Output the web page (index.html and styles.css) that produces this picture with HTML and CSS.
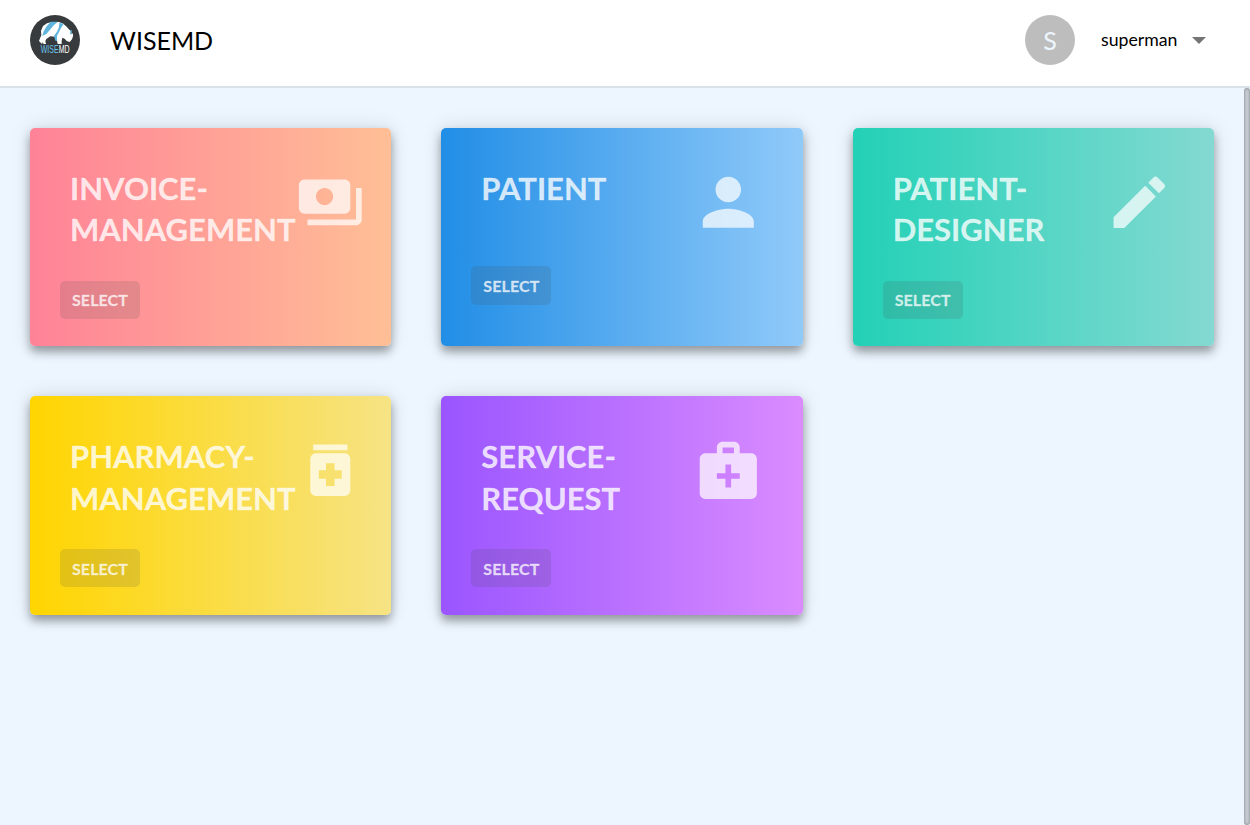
FILE: index.html
```html
<!DOCTYPE html>
<html lang="en">
<head>
<meta charset="utf-8">
<title>WISEMD</title>
<link rel="stylesheet" href="styles.css">
</head>
<body>
<header class="header">
  <svg class="logo" viewBox="30 30 150 150">
    <circle cx="105" cy="105" r="75" fill="#373b3d"/>
    <path fill="#fff" d="M57 108l3-8 4-9-1-14 6-14 12-8 14-4 22 0 13 5 10 9 8 9 5 5 2 9 4-3v9l-3 9-7 8-9-3-6-7-7-3-2 10v9H113l-2-10-6-12-14-1-12 8-3 6 2 9H70l-1-7-3 7z"/>
    <path fill="#5fb4de" d="M92 50h22l-12 10-12 14-10 12-13 7 4-14 9-15zM118 53l13 4-8 12-7 14-5 9v15h-5l-4-15 9-12 6-14zM151 76l4-1v8l-5 7z"/>
    <g transform="translate(62 143) scale(.7 1)">
      <text class="logo-text" x="0" y="0" fill="#6cc5ed">WISE</text>
      <text class="logo-text" x="77.500" y="0" fill="#fff">MD</text>
    </g>
  </svg>
  <h1 class="brand">WISEMD</h1>
  <div class="user">
    <span class="avatar">S</span>
    <span class="username">superman</span>
    <svg class="caret" viewBox="0 0 14 7"><path d="M0 0h14L7 7z" fill="#757575"/></svg>
  </div>
</header>
<main class="content">
  <section class="card invoice">
    <div class="card-head">
      <h2 class="title">INVOICE-<br>MANAGEMENT</h2>
      <svg class="icon" viewBox="0 0 24 24"><path d="M19 14V6c0-1.100-.9-2-2-2H3c-1.100 0-2 .9-2 2v8c0 1.100.9 2 2 2h14c1.100 0 2-.9 2-2zm-9-1c-1.660 0-3-1.340-3-3s1.340-3 3-3 3 1.340 3 3-1.340 3-3 3zm13-6v11c0 1.100-.9 2-2 2H4v-2h17V7h2z"/></svg>
    </div>
    <button class="select">SELECT</button>
  </section>
  <section class="card patient">
    <div class="card-head">
      <h2 class="title">PATIENT</h2>
      <svg class="icon" viewBox="1.250 1.250 21.500 21.500"><path d="M12 12c2.210 0 4-1.790 4-4s-1.790-4-4-4-4 1.790-4 4 1.790 4 4 4zm0 2c-2.670 0-8 1.340-8 4v2h16v-2c0-2.660-5.330-4-8-4z"/></svg>
    </div>
    <button class="select">SELECT</button>
  </section>
  <section class="card designer">
    <div class="card-head">
      <h2 class="title">PATIENT-<br>DESIGNER</h2>
      <svg class="icon" viewBox="0 0 24 24"><path d="M3 17.250V21h3.750L17.810 9.940l-3.750-3.750L3 17.250zM20.710 7.040c.39-.39.39-1.020 0-1.410l-2.340-2.340c-.39-.39-1.020-.39-1.410 0l-1.830 1.830 3.750 3.750 1.830-1.830z"/></svg>
    </div>
    <button class="select">SELECT</button>
  </section>
  <section class="card pharmacy">
    <div class="card-head">
      <h2 class="title">PHARMACY-<br>MANAGEMENT</h2>
      <svg class="icon" viewBox="0 0 24 24"><path d="M6 3h12v2H6zM17 6H7c-1.100 0-2 .9-2 2v11c0 1.100.9 2 2 2h10c1.100 0 2-.9 2-2V8c0-1.100-.9-2-2-2zm-1 9h-2.500v2.500h-3V15H8v-3h2.500V9.500h3V12H16v3z"/></svg>
    </div>
    <button class="select">SELECT</button>
  </section>
  <section class="card service">
    <div class="card-head">
      <h2 class="title">SERVICE-<br>REQUEST</h2>
      <svg class="icon" viewBox="0 0 24 24"><path d="M20 6h-4V4c0-1.100-.9-2-2-2h-4c-1.100 0-2 .9-2 2v2H4c-1.100 0-2 .9-2 2v12c0 1.100.9 2 2 2h16c1.100 0 2-.9 2-2V8c0-1.100-.9-2-2-2zM10 4h4v2h-4V4zm6 11h-3v3h-2v-3H8v-2h3v-3h2v3h3v2z"/></svg>
    </div>
    <button class="select">SELECT</button>
  </section>
</main>
<div class="scroll-thumb"></div>
</body>
</html>
```

FILE: styles.css
```css
* { box-sizing: border-box; }

body {
  margin: 0;
  height: 825px;
  overflow: hidden;
  background: #edf6ff;
  font-family: Lato, "Liberation Sans", sans-serif;
  color: #000;
}

.header {
  display: flex;
  align-items: center;
  height: 88px;
  padding: 0 44px 8px 30px;
  background: #fff;
  border-bottom: 2px solid #dae2e9;
}

.logo { width: 50px; height: 50px; margin-top: 2px; }
.logo-text { font: 30px "Liberation Sans", sans-serif; }

.brand {
  margin: 1px 0 0 30px;
  font-size: 25px;
  font-weight: 400;
}

.user {
  display: flex;
  align-items: center;
  margin: 2px 0 0 auto;
}

.avatar {
  display: flex;
  align-items: center;
  justify-content: center;
  width: 50px;
  height: 50px;
  border-radius: 50%;
  background: #bdbdbd;
  color: #edf6ff;
  font-size: 25px;
}

.username { width: 77px; margin: -2px 0 0 26px; font-size: 17.700px; }
.caret { width: 14px; height: 7px; margin-left: 14px; }

.content {
  display: grid;
  grid-template-columns: repeat(3, minmax(0, 1fr));
  gap: 50px;
  padding: 40px 36px 0 30px;
}

.card {
  height: 218.400px;
  padding: 40px 30px 0;
  border-radius: 5px;
  box-shadow: 0 6px 10px rgba(0, 0, 0, .34), 0 0 20px rgba(0, 0, 0, .12);
}

.card-head {
  display: flex;
  align-items: flex-start;
  justify-content: space-between;
  padding: 0 10px;
}

.title {
  margin: 0;
  font-size: 31px;
  font-weight: 700;
  line-height: 41.400px;
  color: rgba(255, 255, 255, .8);
  -webkit-text-stroke: .3px rgba(255, 255, 255, .5);
}

.icon {
  flex: none;
  width: 68.600px;
  height: 68.600px;
  fill: rgba(255, 255, 255, .72);
}

.select {
  display: block;
  width: 80px;
  height: 38.500px;
  margin: 29.700px 0 0;
  padding: 0;
  border: 0;
  border-radius: 5px;
  background: rgba(77, 77, 77, .15);
  color: rgba(255, 255, 255, .75);
  font: 700 16px Lato, sans-serif;
  letter-spacing: .1px;
  -webkit-text-stroke: .3px rgba(255, 255, 255, .5);
}

.invoice { background: linear-gradient(90deg, #ff8297, #ffbf96); }
.patient { background: linear-gradient(90deg, #218ee6, #90caf9); }
.designer { background: linear-gradient(90deg, #22d1b6, #84d9d2); }
.pharmacy { background: linear-gradient(90deg, #ffd500, #f6e384); }
.service { background: linear-gradient(90deg, #9a55ff, #da8cff); }

.scroll-thumb {
  position: absolute;
  top: 88px;
  right: 0;
  width: 6px;
  height: 737px;
  border-radius: 5px;
  background: #c5cbd1;
  box-shadow: inset 0 0 3px rgba(0, 0, 0, .4);
}
```
